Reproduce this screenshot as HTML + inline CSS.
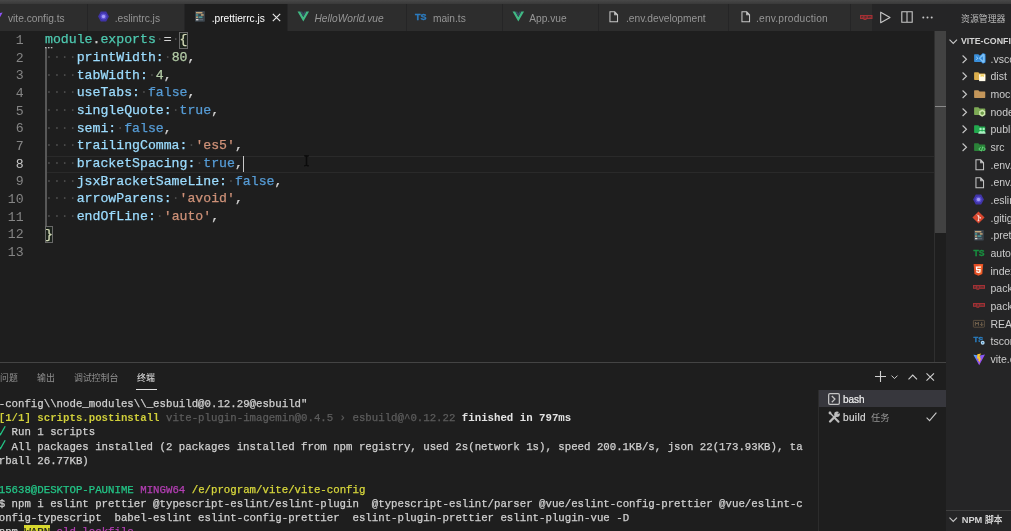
<!DOCTYPE html>
<html><head><meta charset="utf-8"><title>vscode</title>
<style>
*{box-sizing:border-box;margin:0;padding:0}
html,body{width:1011px;height:531px;overflow:hidden;background:#1e1e1e}
body{position:relative;font-family:"Liberation Sans",sans-serif;font-size:10.2px;color:#ccc;-webkit-font-smoothing:antialiased}
.abs{position:absolute}
.tab{position:absolute;top:3.700px;height:27.300px;background:#2d2d2d;border-right:1px solid #252526}
.tab.act{background:#1e1e1e}
.tl{position:absolute;top:.3px;height:27px;line-height:29.4px;white-space:nowrap;color:#969696;font-size:10.2px}
.act .tl{color:#fff}
.ic{position:absolute;overflow:visible}
.code{position:absolute;left:45px;white-space:pre;font-family:"Liberation Mono",monospace;font-size:13.2px;height:17.67px;line-height:17.67px;color:#d4d4d4;-webkit-text-stroke:0.25px currentColor}
.ln{position:absolute;left:0;width:23.6px;text-align:right;font-family:"Liberation Mono",monospace;font-size:13.2px;height:17.67px;line-height:17.67px;color:#858585}
.ws{color:#4a4a4a;-webkit-text-stroke:0}
.t{color:#4ec9b0}.p{color:#9cdcfe}.n{color:#b5cea8}.k{color:#569cd6}.s{color:#ce9178}.y{color:#e2e2c4}
.term{position:absolute;left:-1.3px;white-space:pre;font-family:"Liberation Mono",monospace;font-size:10.727px;height:14.28px;line-height:14.28px;color:#d0d0d0;-webkit-text-stroke:0.25px currentColor}
.term b{font-weight:bold;-webkit-text-stroke:0}
.row{position:absolute;left:990.5px;height:17.6px;line-height:17.6px;white-space:nowrap;color:#ccc;font-size:10.5px}
#w{position:absolute;left:-8px;top:-8px;width:1027px;height:547px;overflow:hidden;will-change:transform}
#v{position:absolute;left:8px;top:8px;width:1011px;height:531px}
</style></head><body><div id="w"><div id="v">

<div class="abs" style="left:-8px;top:0;width:1027px;height:3.700px;background:linear-gradient(#484848,#393939)"></div>
<div class="abs" style="left:-8px;top:3.700px;width:954px;height:27.300px;background:#252526"></div>
<div class="tab" style="left:-8px;width:96px"><svg class="ic" style="left:-0.8000000000000007px;top:7.8px" width="12" height="12" viewBox="0 0 24 24"><defs><linearGradient id="vg1" x1="0" y1="0" x2="1" y2=".7"><stop offset="0" stop-color="#49b6ff"/><stop offset=".5" stop-color="#7c5cf6"/><stop offset="1" stop-color="#b63df5"/></linearGradient></defs><path fill="url(#vg1)" d="M.8 3.300 12 23.500 23.200 3 13 5z"/><path fill="#fbc72a" d="M15.800.8 8.400 2.300 7.900 11l2.900-.5-.9 4.800 2-.4-.7 5.400 4.800-9.900-2.500.4 1.100-3.900-2.600.5z"/></svg><div class="tl" style="left:16px;">vite.config.ts</div></div>
<div class="tab" style="left:88px;width:97px"><svg class="ic" style="left:9px;top:6.3px" width="13" height="13" viewBox="0 0 24 24"><path fill="#4034a8" d="M7 2.600h10l5 9.400-5 9.400H7L2 12z"/><circle cx="12" cy="12" r="5.600" fill="#5d52d4"/><circle cx="12" cy="12" r="3.200" fill="#a49cf6"/></svg><div class="tl" style="left:26.700000000000003px;">.eslintrc.js</div></div>
<div class="tab act" style="left:185px;width:103px"><svg class="ic" style="left:10px;top:7.4px" width="9.9" height="10.69" viewBox="0 0 20 21.600"><rect x="0" y="0" width="20" height="21.600" rx="1.500" fill="#3b444c"/><g stroke-width="3" stroke-linecap="butt"><path stroke="#c5a679" d="M2 3.500h13"/><path stroke="#4d9f9f" d="M2 8h4.500"/><path stroke="#c5a679" d="M12 8h5.500"/><path stroke="#c5a679" d="M2 12.500h4"/><path stroke="#4d9f9f" d="M7 12.500h8"/><path stroke="#d6d6d6" d="M2 17.500h5"/><path stroke="#5a6670" d="M8.500 17.500h8"/></g></svg><div class="tl" style="left:26.69999999999999px;">.prettierrc.js</div><svg class="ic" style="left:87.100px;top:9.600px" width="9" height="9" viewBox="0 0 9 9"><path stroke="#e8e8e8" stroke-width="1.15" fill="none" d="M.8.8l7.400 7.400M8.200.8.800 8.200"/></svg></div>
<div class="tab" style="left:288px;width:119px"><svg class="ic" style="left:8.699999999999989px;top:6.6px" width="12.6" height="12.6" viewBox="0 0 24 24"><path fill="#41b883" d="M1 3h5.2L12 13.2 17.8 3H23L12 22z"/><path fill="#35495e" d="M6.2 3h3.6L12 6.9 14.2 3h3.6L12 13.2z"/></svg><div class="tl" style="left:26.5px;font-style:italic;">HelloWorld.vue</div></div>
<div class="tab" style="left:407px;width:96px"><div class="abs" style="left:8px;top:8.2px;font:bold 9px/10px 'Liberation Sans',sans-serif;color:#2c7cc0;letter-spacing:-0.1px;-webkit-text-stroke:.35px #2c7cc0">TS</div><div class="tl" style="left:25.899999999999977px;">main.ts</div></div>
<div class="tab" style="left:503px;width:96px"><svg class="ic" style="left:8.699999999999989px;top:6.6px" width="12.6" height="12.6" viewBox="0 0 24 24"><path fill="#41b883" d="M1 3h5.2L12 13.2 17.8 3H23L12 22z"/><path fill="#35495e" d="M6.2 3h3.6L12 6.9 14.2 3h3.6L12 13.2z"/></svg><div class="tl" style="left:26.200000000000045px;">App.vue</div></div>
<div class="tab" style="left:599px;width:130px"><svg class="ic" style="left:10px;top:7.1px" width="9.5" height="11.5" viewBox="0 0 10 12"><path fill="none" stroke="#c5c5c5" stroke-width="1.1" d="M1 .8h5L9 3.8v7.4H1zM6 .8v3h3"/></svg><div class="tl" style="left:27px;">.env.development</div></div>
<div class="tab" style="left:729px;width:122px"><svg class="ic" style="left:11.5px;top:7.1px" width="9.5" height="11.5" viewBox="0 0 10 12"><path fill="none" stroke="#c5c5c5" stroke-width="1.1" d="M1 .8h5L9 3.8v7.4H1zM6 .8v3h3"/></svg><div class="tl" style="left:27px;"><span style="letter-spacing:.2px">.env.production</span></div></div>
<div class="tab" style="left:851px;width:22px"><svg class="ic" style="left:9px;top:11px" width="12.5" height="5" viewBox="0 0 25 10"><rect width="25" height="8" fill="#a33034"/><rect x="7" y="8" width="6" height="2" fill="#a33034"/><path fill="#2d2d2d" fill-opacity=".75" d="M2.5 2h4v4h-1.3v-2.7h-1.2v2.7h-1.5zM9 2h4v4h-2v1.3h-2zm1.6 1.3v1.5h.9v-1.5zM15.5 2h7v4h-1.3v-2.7h-1.1v2.7h-1.3v-2.7h-1.1v2.7h-2.2z"/></svg><div class="tl" style="left:0px;"></div></div>
<svg class="ic" style="left:879px;top:11px" width="13" height="13" viewBox="0 0 13 13"><path fill="none" stroke="#c8c8c8" stroke-width="1.1" stroke-linejoin="round" d="M1.700 1.200v10.600l9.300-5.300z"/></svg>
<svg class="ic" style="left:900.5px;top:11px" width="12" height="12" viewBox="0 0 12 12"><path fill="none" stroke="#c8c8c8" stroke-width="1.1" d="M.8.8h10.400v10.400H.8zM6 .8v10.400"/></svg>
<svg class="ic" style="left:921.5px;top:16px" width="11" height="3" viewBox="0 0 11 3"><circle cx="1.300" cy="1.500" r="1" fill="#c8c8c8"/><circle cx="5.500" cy="1.500" r="1" fill="#c8c8c8"/><circle cx="9.700" cy="1.500" r="1" fill="#c8c8c8"/></svg>
<div class="abs" style="left:45px;top:155.700px;width:889px;height:17.400px;border-top:1.600px solid #2a2a2a;border-bottom:1.600px solid #2a2a2a"></div>
<div class="abs" style="left:45.300px;top:48.02px;width:1.400px;height:177.70px;background:#585858"></div>
<div class="ln" style="top:31.85px;color:#858585">1</div>
<div class="code" style="top:31.35px"><span class="t">module</span>.<span class="t">exports</span><span class="ws">·</span>=<span class="ws">·</span><span class="y">{</span></div>
<div class="ln" style="top:49.52px;color:#858585">2</div>
<div class="code" style="top:49.02px"><span class="ws">····</span><span class="p">printWidth:</span><span class="ws">·</span><span class="n">80</span>,</div>
<div class="ln" style="top:67.19px;color:#858585">3</div>
<div class="code" style="top:66.69px"><span class="ws">····</span><span class="p">tabWidth:</span><span class="ws">·</span><span class="n">4</span>,</div>
<div class="ln" style="top:84.86px;color:#858585">4</div>
<div class="code" style="top:84.36px"><span class="ws">····</span><span class="p">useTabs:</span><span class="ws">·</span><span class="k">false</span>,</div>
<div class="ln" style="top:102.53px;color:#858585">5</div>
<div class="code" style="top:102.03px"><span class="ws">····</span><span class="p">singleQuote:</span><span class="ws">·</span><span class="k">true</span>,</div>
<div class="ln" style="top:120.20px;color:#858585">6</div>
<div class="code" style="top:119.70px"><span class="ws">····</span><span class="p">semi:</span><span class="ws">·</span><span class="k">false</span>,</div>
<div class="ln" style="top:137.87px;color:#858585">7</div>
<div class="code" style="top:137.37px"><span class="ws">····</span><span class="p">trailingComma:</span><span class="ws">·</span><span class="s">'es5'</span>,</div>
<div class="ln" style="top:155.54px;color:#c6c6c6">8</div>
<div class="code" style="top:155.04px"><span class="ws">····</span><span class="p">bracketSpacing:</span><span class="ws">·</span><span class="k">true</span>,</div>
<div class="ln" style="top:173.21px;color:#858585">9</div>
<div class="code" style="top:172.71px"><span class="ws">····</span><span class="p">jsxBracketSameLine:</span><span class="ws">·</span><span class="k">false</span>,</div>
<div class="ln" style="top:190.88px;color:#858585">10</div>
<div class="code" style="top:190.38px"><span class="ws">····</span><span class="p">arrowParens:</span><span class="ws">·</span><span class="s">'avoid'</span>,</div>
<div class="ln" style="top:208.55px;color:#858585">11</div>
<div class="code" style="top:208.05px"><span class="ws">····</span><span class="p">endOfLine:</span><span class="ws">·</span><span class="s">'auto'</span>,</div>
<div class="ln" style="top:226.22px;color:#858585">12</div>
<div class="code" style="top:225.72px"><span class="y">}</span></div>
<div class="ln" style="top:243.89px;color:#858585">13</div>
<div class="abs" style="left:179.36px;top:31.85px;width:8.52px;height:17.07px;border:1px solid #686868;background:rgba(0,100,0,.07)"></div>
<div class="abs" style="left:44.70px;top:226.22px;width:8.52px;height:17.07px;border:1px solid #686868;background:rgba(0,100,0,.07)"></div>
<svg class="ic" style="left:45px;top:46.500px" width="8" height="2" viewBox="0 0 8 2"><rect x="0" width="1.600" height="1.300" fill="#bbb"/><rect x="2.900" width="1.600" height="1.300" fill="#bbb"/><rect x="5.800" width="1.600" height="1.300" fill="#bbb"/></svg>
<div class="abs" style="left:242.72px;top:155.54px;width:1.5px;height:16.67px;background:#c8c8c8"></div>
<svg class="ic" style="left:303.600px;top:154.800px" width="5" height="11.400" viewBox="0 0 5 11.400"><path fill="none" stroke="#0b0b0b" stroke-width="1.500" d="M.2.700c1.300 0 2.300.4 2.300 1.300 0-.9 1-1.300 2.300-1.300M2.500 1.500v8.400M.2 10.700c1.300 0 2.300-.4 2.300-1.300 0 .9 1 1.300 2.300 1.300"/></svg>
<div class="abs" style="left:934px;top:31px;width:1px;height:331px;background:#2f2f2f"></div>
<div class="abs" style="left:934.500px;top:31px;width:11.500px;height:202px;background:#424242"></div>
<div class="abs" style="left:935px;top:105.500px;width:11px;height:1.500px;background:#8a8a8a"></div>
<div class="abs" style="left:-8px;top:362px;width:954px;height:1px;background:#444"></div>
<svg style="position:absolute;left:-0.50px;top:372.36px;overflow:visible" width="17.8" height="10.7" viewBox="0 0 17.8 10.7"><text x="0" y="8.72" font-size="8.9" fill="#8f8f8f" font-family="'Liberation Sans','Noto Sans CJK SC',sans-serif">问题</text></svg>
<svg style="position:absolute;left:37.00px;top:372.36px;overflow:visible" width="17.8" height="10.7" viewBox="0 0 17.8 10.7"><text x="0" y="8.72" font-size="8.9" fill="#8f8f8f" font-family="'Liberation Sans','Noto Sans CJK SC',sans-serif">输出</text></svg>
<svg style="position:absolute;left:74.00px;top:372.36px;overflow:visible" width="44.5" height="10.7" viewBox="0 0 44.5 10.7"><text x="0" y="8.72" font-size="8.9" fill="#8f8f8f" font-family="'Liberation Sans','Noto Sans CJK SC',sans-serif">调试控制台</text></svg>
<svg style="position:absolute;left:137.00px;top:372.36px;overflow:visible" width="17.8" height="10.7" viewBox="0 0 17.8 10.7"><text x="0" y="8.72" font-size="8.9" fill="#e7e7e7" font-family="'Liberation Sans','Noto Sans CJK SC',sans-serif">终端</text></svg>
<div class="abs" style="left:136px;top:388.600px;width:20.500px;height:1px;background:#e0e0e0"></div>
<div class="term" style="top:396.91px">-config\\node_modules\\_esbuild@0.12.29@esbuild"</div>
<div class="term" style="top:411.19px"><b style="color:#d0cf3a">[1/1] scripts.postinstall</b><span style="color:#5c5c5c"> vite-plugin-imagemin@0.4.5 › esbuild@^0.12.22</span> <b style="color:#e4e4e4">finished in 797ms</b></div>
<div class="term" style="top:425.47px"><span style="display:inline-block;width:6.421px;height:10px;position:relative;vertical-align:baseline"><svg style="position:absolute;left:-.6px;top:-.5px" width="8" height="11" viewBox="0 0 8 11"><path fill="none" stroke="#23c486" stroke-width="1.300" d="M.3 6.800l2.200 2.700L7.200 1.300"/></svg></span> Run 1 scripts</div>
<div class="term" style="top:439.75px"><span style="display:inline-block;width:6.421px;height:10px;position:relative;vertical-align:baseline"><svg style="position:absolute;left:-.6px;top:-.5px" width="8" height="11" viewBox="0 0 8 11"><path fill="none" stroke="#23c486" stroke-width="1.300" d="M.3 6.800l2.200 2.700L7.200 1.300"/></svg></span> All packages installed (2 packages installed from npm registry, used 2s(network 1s), speed 200.1KB/s, json 22(173.93KB), ta</div>
<div class="term" style="top:454.03px">rball 26.77KB)</div>
<div class="term" style="top:482.59px"><span style="color:#23c486">15638@DESKTOP-PAUNIME</span> <span style="color:#b43fb4">MINGW64</span> <span style="color:#d8d83c">/e/program/vite/vite-config</span></div>
<div class="term" style="top:496.87px">$ npm i eslint prettier @typescript-eslint/eslint-plugin  @typescript-eslint/parser @vue/eslint-config-prettier @vue/eslint-c</div>
<div class="term" style="top:511.15px">onfig-typescript  babel-eslint eslint-config-prettier  eslint-plugin-prettier eslint-plugin-vue -D</div>
<div class="term" style="top:525.43px">npm <span style="background:#d8d82e;color:#222;padding:1.200px 0 .8px">WARN</span> <span style="color:#b43fb4">old lockfile</span></div>
<div class="abs" style="left:818px;top:390px;width:1px;height:150px;background:#2c2c2c"></div>
<div class="abs" style="left:819px;top:390.300px;width:127px;height:17.100px;background:#37373d"></div>
<svg class="ic" style="left:827.700px;top:393.200px" width="12" height="12" viewBox="0 0 12 12"><rect x=".65" y=".65" width="10.700" height="10.700" rx="1.300" fill="none" stroke="#c4c4c4" stroke-width="1.250"/><path fill="none" stroke="#c4c4c4" stroke-width="1.300" d="M3.800 3l3.100 3.100-3.100 3.100"/></svg>
<div class="abs" style="left:843px;top:390.500px;height:17px;line-height:18.300px;color:#f0f0f0;font-size:10px;-webkit-text-stroke:.2px #f0f0f0">bash</div>
<svg class="ic" style="left:827.500px;top:410.700px" width="12.600" height="12.600" viewBox="0 0 24 24"><g fill="none" stroke="#bdbdbd" stroke-linecap="round"><path stroke-width="4.600" d="M4 20L14.500 9.500"/><path stroke-width="4" d="M13 13.500l7 7"/><path stroke-width="2.600" d="M3 3l7.500 7.500"/></g><circle cx="17.200" cy="6.300" r="5.300" fill="#bdbdbd"/><path fill="#1e1e1e" d="M17.300 6.400l4.400-5.400 2.300 2.300z"/><circle cx="3.800" cy="3.800" r="2.700" fill="#bdbdbd"/></svg>
<div class="abs" style="left:843px;top:408px;height:17.600px;line-height:19.200px;letter-spacing:.35px;color:#d8d8d8;font-size:10px;-webkit-text-stroke:.2px #d8d8d8">build</div>
<svg style="position:absolute;left:871.20px;top:411.62px;overflow:visible" width="18.6" height="11.2" viewBox="0 0 18.6 11.2"><text x="0" y="9.11" font-size="9.3" fill="#979797" font-family="'Liberation Sans','Noto Sans CJK SC',sans-serif">任务</text></svg>
<svg class="ic" style="left:925.500px;top:412px" width="11" height="9.500" viewBox="0 0 11 9.500"><path fill="none" stroke="#c8c8c8" stroke-width="1.100" d="M.6 5.600l3 3.100L10.400.7"/></svg>
<svg class="ic" style="left:875.400px;top:371px" width="11" height="11" viewBox="0 0 11 11"><path stroke="#d0d0d0" stroke-width="1.100" d="M5.500 0v11M0 5.500h11"/></svg>
<svg class="ic" style="left:890.600px;top:374.500px" width="7" height="4.500" viewBox="0 0 7 4.500"><path fill="none" stroke="#d0d0d0" stroke-width="1" d="M.5.6l3 3 3-3"/></svg>
<svg class="ic" style="left:908px;top:373.800px" width="9.500" height="6" viewBox="0 0 9.500 6"><path fill="none" stroke="#d0d0d0" stroke-width="1.100" d="M.5 5.400l4.250-4.300L9 5.400"/></svg>
<svg class="ic" style="left:926px;top:372.800px" width="8.500" height="8" viewBox="0 0 8.500 8"><path fill="none" stroke="#d0d0d0" stroke-width="1.100" d="M.5.4l7.500 7.200M8 .4L.5 7.600"/></svg>
<div class="abs" style="left:946px;top:3.700px;width:73px;height:539px;background:#252526"></div>
<svg style="position:absolute;left:961.00px;top:12.56px;overflow:visible" width="44.5" height="10.7" viewBox="0 0 44.5 10.7"><text x="0" y="8.72" font-size="8.9" fill="#bbbbbb" font-family="'Liberation Sans','Noto Sans CJK SC',sans-serif">资源管理器</text></svg>
<svg class="ic" style="left:949.2px;top:38.600px" width="8.500" height="5.500" viewBox="0 0 8.500 5.500"><path fill="none" stroke="#c8c8c8" stroke-width="1.100" d="M.5.6l3.750 3.900L8 .6"/></svg>
<div class="abs" style="left:961px;top:32.200px;height:17.600px;line-height:18px;font-weight:bold;font-size:8.800px;color:#d4d4d4;white-space:nowrap">VITE-CONFIG</div>
<div class="row" style="top:50.50px">.vscode</div>
<div class="row" style="top:68.17px">dist</div>
<div class="row" style="top:85.84px">mock</div>
<div class="row" style="top:103.51px">node_modules</div>
<div class="row" style="top:121.18px">public</div>
<div class="row" style="top:138.85px">src</div>
<div class="row" style="top:156.52px">.env.development</div>
<div class="row" style="top:174.19px">.env.production</div>
<div class="row" style="top:191.86px">.eslintrc.js</div>
<div class="row" style="top:209.53px">.gitignore</div>
<div class="row" style="top:227.20px">.prettierrc.js</div>
<div class="row" style="top:244.87px">auto-imports.d.ts</div>
<div class="row" style="top:262.54px">index.html</div>
<div class="row" style="top:280.21px">package-lock.json</div>
<div class="row" style="top:297.88px">package.json</div>
<div class="row" style="top:315.55px">README.md</div>
<div class="row" style="top:333.22px">tsconfig.json</div>
<div class="row" style="top:350.89px">vite.config.ts</div>
<svg class="ic" style="left:961.6px;top:54.70px" width="5.500" height="8.500" viewBox="0 0 5.500 8.500"><path fill="none" stroke="#c8c8c8" stroke-width="1.100" d="M.6.5l3.900 3.750L.6 8"/></svg>
<svg class="ic" style="left:961.6px;top:72.37px" width="5.500" height="8.500" viewBox="0 0 5.500 8.500"><path fill="none" stroke="#c8c8c8" stroke-width="1.100" d="M.6.5l3.900 3.750L.6 8"/></svg>
<svg class="ic" style="left:961.6px;top:90.04px" width="5.500" height="8.500" viewBox="0 0 5.500 8.500"><path fill="none" stroke="#c8c8c8" stroke-width="1.100" d="M.6.5l3.900 3.750L.6 8"/></svg>
<svg class="ic" style="left:961.6px;top:107.71px" width="5.500" height="8.500" viewBox="0 0 5.500 8.500"><path fill="none" stroke="#c8c8c8" stroke-width="1.100" d="M.6.5l3.900 3.750L.6 8"/></svg>
<svg class="ic" style="left:961.6px;top:125.38px" width="5.500" height="8.500" viewBox="0 0 5.500 8.500"><path fill="none" stroke="#c8c8c8" stroke-width="1.100" d="M.6.5l3.900 3.750L.6 8"/></svg>
<svg class="ic" style="left:961.6px;top:143.05px" width="5.500" height="8.500" viewBox="0 0 5.500 8.500"><path fill="none" stroke="#c8c8c8" stroke-width="1.100" d="M.6.5l3.900 3.750L.6 8"/></svg>
<svg class="ic" style="left:973.900px;top:53.20px" width="11.600" height="10.630" viewBox="0 0 24 22"><path fill="#3a8fda" d="M1.500 2.500h7.500l2.500 2.600h10.500a1.300 1.300 0 0 1 1.300 1.300V17.200a1.300 1.300 0 0 1-1.300 1.300H1.500A1.300 1.300 0 0 1 .2 17.200V3.800A1.300 1.300 0 0 1 1.500 2.500z"/><path fill="#2f86d6" d="M18.500 0l5.300 2.300v17.400L18.500 22 8.500 13l-3.300 2.700-1.700-1L7 11 3.500 7.300l1.700-1L8.500 9z"/><path fill="#7dc0f5" d="M18.500 1.500l3.800 1.600v15.800l-3.800 1.600L9.500 11zM18.500 6.500L13 11l5.500 4.500z" fill-rule="evenodd"/><path fill="#a9d8fb" d="M5 7.300l4 3.700-4 3.700-1.200-.7L7 11 3.800 8z"/></svg>
<svg class="ic" style="left:973.900px;top:70.87px" width="11.600" height="10.630" viewBox="0 0 24 22"><path fill="#dcae4c" d="M1.500 2.500h7.500l2.500 2.600h10.500a1.300 1.300 0 0 1 1.300 1.300V17.200a1.300 1.300 0 0 1-1.300 1.300H1.500A1.300 1.300 0 0 1 .2 17.200V3.800A1.300 1.300 0 0 1 1.500 2.500z"/><path fill="#fffbea" d="M10.500 7h13v14h-13z"/><path fill="#f2cf57" d="M13.500 7h7v5.500l-3.500-1.800-3.500 1.800z"/></svg>
<svg class="ic" style="left:973.900px;top:88.54px" width="11.600" height="10.630" viewBox="0 0 24 22"><path fill="#c4965a" d="M1.500 2.500h7.500l2.500 2.600h10.500a1.300 1.300 0 0 1 1.300 1.300V17.200a1.300 1.300 0 0 1-1.300 1.300H1.500A1.300 1.300 0 0 1 .2 17.200V3.800A1.300 1.300 0 0 1 1.500 2.500z"/></svg>
<svg class="ic" style="left:973.900px;top:106.21px" width="11.600" height="10.630" viewBox="0 0 24 22"><path fill="#7daa55" d="M1.500 2.500h7.500l2.500 2.600h10.500a1.300 1.300 0 0 1 1.300 1.300V17.200a1.300 1.300 0 0 1-1.300 1.300H1.500A1.300 1.300 0 0 1 .2 17.200V3.800A1.300 1.300 0 0 1 1.500 2.500z"/><path fill="#cfe8ae" d="M17 7.500l6.300 3.600v7.300L17 22l-6.300-3.600v-7.300z"/><path fill="#6c9a48" d="M17 10.800l3.400 2v4l-3.400 2-3.400-2v-4z"/></svg>
<svg class="ic" style="left:973.900px;top:123.88px" width="11.600" height="10.630" viewBox="0 0 24 22"><path fill="#22a94e" d="M1.500 2.500h7.500l2.500 2.600h10.500a1.300 1.300 0 0 1 1.300 1.300V17.200a1.300 1.300 0 0 1-1.300 1.300H1.500A1.300 1.300 0 0 1 .2 17.200V3.800A1.300 1.300 0 0 1 1.500 2.500z"/><circle cx="13.500" cy="10.500" r="2.500" fill="#a8f0c0"/><circle cx="20" cy="10.500" r="2.500" fill="#a8f0c0"/><path fill="#a8f0c0" d="M9 20c0-3.600 2.200-5.300 4.500-5.300 1.700 0 3.200 1.200 3.200 1.200s1.500-1.200 3.300-1.200c2.200 0 4 1.700 4 5.300z"/></svg>
<svg class="ic" style="left:973.900px;top:141.55px" width="11.600" height="10.630" viewBox="0 0 24 22"><path fill="#2a8238" d="M1.500 2.500h7.500l2.500 2.600h10.500a1.300 1.300 0 0 1 1.300 1.300V17.200a1.300 1.300 0 0 1-1.300 1.300H1.500A1.300 1.300 0 0 1 .2 17.200V3.800A1.300 1.300 0 0 1 1.500 2.500z"/><path fill="none" stroke="#6fe388" stroke-width="1.800" d="M13.800 10.500l-3.800 4 3.800 4M19.700 10.500l3.800 4-3.800 4M18 9.500l-2.500 10"/></svg>
<svg class="ic" style="left:974.7px;top:159.12px" width="9.5" height="11.5" viewBox="0 0 10 12"><path fill="none" stroke="#c5c5c5" stroke-width="1.1" d="M1 .8h5L9 3.8v7.4H1zM6 .8v3h3"/></svg>
<svg class="ic" style="left:974.7px;top:176.79px" width="9.5" height="11.5" viewBox="0 0 10 12"><path fill="none" stroke="#c5c5c5" stroke-width="1.1" d="M1 .8h5L9 3.8v7.4H1zM6 .8v3h3"/></svg>
<svg class="ic" style="left:972.4px;top:192.56000000000003px" width="13" height="13" viewBox="0 0 24 24"><path fill="#4034a8" d="M7 2.600h10l5 9.400-5 9.400H7L2 12z"/><circle cx="12" cy="12" r="5.600" fill="#5d52d4"/><circle cx="12" cy="12" r="3.200" fill="#a49cf6"/></svg>
<svg class="ic" style="left:972.400px;top:210.53px" width="13" height="13" viewBox="0 0 24 24"><path fill="#d8472f" d="M12 .8 23.200 12 12 23.200.8 12z"/><path stroke="#f6ddd6" stroke-width="1.500" fill="none" d="M9 6.500l5.500 5.500M12 9.500v8"/><circle cx="12" cy="17.500" r="1.600" fill="#f6ddd6"/><circle cx="15" cy="12.500" r="1.600" fill="#f6ddd6"/><circle cx="12" cy="9.300" r="1.600" fill="#f6ddd6"/></svg>
<svg class="ic" style="left:974.2px;top:229.70000000000002px" width="9.8" height="10.58" viewBox="0 0 20 21.600"><rect x="0" y="0" width="20" height="21.600" rx="1.500" fill="#3b444c"/><g stroke-width="3" stroke-linecap="butt"><path stroke="#c5a679" d="M2 3.500h13"/><path stroke="#4d9f9f" d="M2 8h4.500"/><path stroke="#c5a679" d="M12 8h5.500"/><path stroke="#c5a679" d="M2 12.500h4"/><path stroke="#4d9f9f" d="M7 12.500h8"/><path stroke="#d6d6d6" d="M2 17.500h5"/><path stroke="#5a6670" d="M8.500 17.500h8"/></g></svg>
<div class="abs" style="left:973.5px;top:248.37px;font:bold 8.6px/10px 'Liberation Sans',sans-serif;color:#188f3f;letter-spacing:-0.1px;-webkit-text-stroke:.35px #188f3f">TS</div>
<svg class="ic" style="left:973.3px;top:264.04px" width="10.8" height="12" viewBox="0 0 22 25"><path fill="#e44d26" d="M1 0h20l-1.800 21L11 24.500 2.800 21z"/><path fill="#f16529" d="M11 1.700v21l6.600-2.100L19.100 1.700z"/><path fill="#fff" d="M5.500 5h11l-.3 2.800H8.600l.2 2.700h7.100l-.6 7.200L11 19l-4.300-1.300-.3-3.500h2.700l.1 1.500 1.800.5 1.800-.5.2-2.600H6.200z"/></svg>
<svg class="ic" style="left:972.8px;top:285.31px" width="12" height="4.8" viewBox="0 0 25 10"><rect width="25" height="8" fill="#a33034"/><rect x="7" y="8" width="6" height="2" fill="#a33034"/><path fill="#2d2d2d" fill-opacity=".75" d="M2.5 2h4v4h-1.3v-2.7h-1.2v2.7h-1.5zM9 2h4v4h-2v1.3h-2zm1.6 1.3v1.5h.9v-1.5zM15.5 2h7v4h-1.3v-2.7h-1.1v2.7h-1.3v-2.7h-1.1v2.7h-2.2z"/></svg>
<svg class="ic" style="left:972.8px;top:302.98px" width="12" height="4.8" viewBox="0 0 25 10"><rect width="25" height="8" fill="#a33034"/><rect x="7" y="8" width="6" height="2" fill="#a33034"/><path fill="#2d2d2d" fill-opacity=".75" d="M2.5 2h4v4h-1.3v-2.7h-1.2v2.7h-1.5zM9 2h4v4h-2v1.3h-2zm1.6 1.3v1.5h.9v-1.5zM15.5 2h7v4h-1.3v-2.7h-1.1v2.7h-1.3v-2.7h-1.1v2.7h-2.2z"/></svg>
<svg class="ic" style="left:972.900px;top:319.55px" width="11.800" height="7.600" viewBox="0 0 25 16"><rect x=".8" y=".8" width="23.400" height="14.400" rx="1.500" fill="none" stroke="#6c5b46" stroke-width="1.600"/><path fill="none" stroke="#7d6a52" stroke-width="1.900" d="M5 12V4.500l3.300 4 3.200-4V12M18.500 4.500v7M15.500 8.800l3 3.200 3-3.200"/></svg>
<div class="abs" style="left:973.6px;top:334.92px;font:bold 7.6px/10px 'Liberation Sans',sans-serif;color:#2a7fc2;letter-spacing:-0.1px;-webkit-text-stroke:.35px #2a7fc2">TS</div>
<svg class="ic" style="left:979.600px;top:340.22px" width="5.400" height="5.400" viewBox="0 0 10 10"><circle cx="5" cy="5" r="5" fill="#252526"/><circle cx="5" cy="5" r="3.600" fill="#b5dcf6"/><circle cx="5" cy="5" r="1.300" fill="#2a6fa8"/></svg>
<svg class="ic" style="left:972.6px;top:352.69px" width="12.4" height="12.4" viewBox="0 0 24 24"><defs><linearGradient id="vg2" x1="0" y1="0" x2="1" y2=".7"><stop offset="0" stop-color="#49b6ff"/><stop offset=".5" stop-color="#7c5cf6"/><stop offset="1" stop-color="#b63df5"/></linearGradient></defs><path fill="url(#vg2)" d="M.8 3.300 12 23.500 23.200 3 13 5z"/><path fill="#fbc72a" d="M15.800.8 8.400 2.300 7.900 11l2.900-.5-.9 4.800 2-.4-.7 5.400 4.800-9.900-2.500.4 1.100-3.900-2.600.5z"/></svg>
<div class="abs" style="left:946px;top:510px;width:73px;height:1px;background:#3f3f3f"></div>
<svg class="ic" style="left:949.200px;top:516.800px" width="8.500" height="5.500" viewBox="0 0 8.500 5.500"><path fill="none" stroke="#c8c8c8" stroke-width="1.100" d="M.5.6l3.750 3.900L8 .6"/></svg>
<div class="abs" style="left:961.700px;top:510.800px;height:17.600px;line-height:18px;font-weight:bold;font-size:9.300px;color:#d4d4d4;white-space:nowrap">NPM</div>
<svg style="position:absolute;left:985.00px;top:514.38px;overflow:visible" width="17.4" height="10.4" viewBox="0 0 17.4 10.4"><text x="0" y="8.53" font-size="8.7" font-weight="bold" fill="#d4d4d4" font-family="'Liberation Sans','Noto Sans CJK SC',sans-serif">脚本</text></svg>
</div></div></body></html>
